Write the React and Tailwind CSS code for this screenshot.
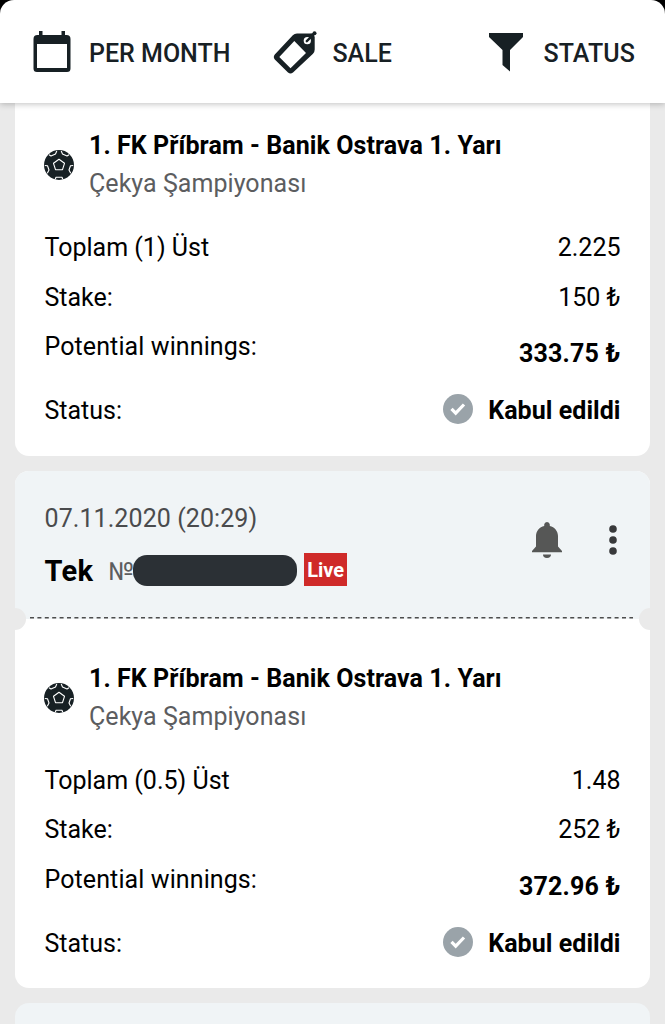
const tickets = [
  {
    id: 1,
    match: "1. FK Příbram - Banik Ostrava 1. Yarı",
    league: "Çekya Şampiyonası",
    market: "Toplam (1) Üst",
    odds: "2.225",
    stake: "150 ₺",
    winnings: "333.75 ₺",
    status: "Kabul edildi",
  },
  {
    id: 2,
    date: "07.11.2020 (20:29)",
    match: "1. FK Příbram - Banik Ostrava 1. Yarı",
    league: "Çekya Şampiyonası",
    market: "Toplam (0.5) Üst",
    odds: "1.48",
    stake: "252 ₺",
    winnings: "372.96 ₺",
    status: "Kabul edildi",
  },
];

function CalendarIcon() {
  return (
    <svg width="38" height="42" viewBox="0 0 38 42" fill="#172024">
      <path d="M6 0h3.500v4h19V0H32v4h1.500a4 4 0 0 1 4 4v29.500a3.500 3.500 0 0 1-3.500 3.500H4a3.500 3.500 0 0 1-3.500-3.500V8a4 4 0 0 1 4-4H6ZM4 13v24h30V13Z" fillRule="evenodd" />
    </svg>
  );
}

function TagIcon() {
  return (
    <svg width="44" height="44" viewBox="0 0 44 44">
      <path
        d="M24 3.500H37L40.200 3.300 41.700 7V19.500q0 2.500-1.700 4.200L20 42.500q-2.500 2-5 0L1.800 29.500q-2-2.500 0-5L19.800 5.300q1.700-1.800 4.200-1.800ZM21.300 11 6.300 27 17.500 38.300 33 23Z"
        fill="#172024"
        fillRule="evenodd"
      />
      <circle cx="34.300" cy="10.700" r="3.600" fill="#fff" />
      <path d="m33.800 11.200 7-7" stroke="#172024" strokeWidth="2.400" strokeLinecap="round" />
      <circle cx="41.500" cy="3.300" r="2" fill="#172024" />
    </svg>
  );
}

function FunnelIcon() {
  return (
    <svg className="mt-[2px]" width="34" height="39" viewBox="0 0 34 39" fill="#172024">
      <path d="M0 0h34v4L21 17v21.500L13.500 32V17L0 4Z" />
    </svg>
  );
}

function BallIcon() {
  return (
    <svg className="shrink-0" width="30" height="30" viewBox="0 0 30 30">
      <circle cx="15" cy="15" r="15" fill="#172024" />
      <g fill="none" stroke="#fff" strokeWidth="1.100" strokeLinejoin="round">
        <path d="m15 9.300 5.500 4-2 6.400h-7l-2-6.400Z" />
        <path d="m5 4.800 2 1.200 4.500-2 1.300-3M25 4.800l-2 1.200-4.500-2-1.300-3" />
        <path d="m.8 15.500 2.700.2 1.500 4.300-1.700 3.300M29.200 15.500l-2.700.2-1.500 4.300 1.700 3.300M11.300 29.300l.7-2h6l.7 2" />
      </g>
    </svg>
  );
}

function CheckIcon() {
  return (
    <svg className="-mt-[4px]" width="30" height="30" viewBox="0 0 30 30">
      <circle cx="15" cy="15" r="15" fill="#9aa3a9" />
      <path d="m8.500 14.800 4.200 4.300 8.300-8.600" fill="none" stroke="#fff" strokeWidth="3.200" />
    </svg>
  );
}

function BellIcon() {
  return (
    <svg width="30" height="36" viewBox="0 0 30 36" fill="#565756">
      <path d="M15 0a2.800 2.800 0 0 1 2.800 2.500V4C22.500 5.200 26 9 26 14v10.500L30 29v1.300H0V29l4-4.500V14C4 9 7.500 5.200 12.200 4V2.500A2.800 2.800 0 0 1 15 0ZM11 32.500h8a4 3.500 0 0 1-8 0Z" />
    </svg>
  );
}

function DotsIcon() {
  return (
    <svg width="8" height="30" viewBox="0 0 8 30" fill="#38393b">
      <circle cx="4" cy="4" r="3.800" />
      <circle cx="4" cy="15" r="3.800" />
      <circle cx="4" cy="26" r="3.800" />
    </svg>
  );
}

function TicketHeader({ date }) {
  return (
    <div className="relative flex h-[148px] justify-between bg-[#f0f4f6] pl-[29.5px] pr-[33px]">
      <div className="pt-[28.5px]">
        <p className="h-[40px] text-[25px] leading-[40px] tracking-[0.08px] text-[#4a4b4d]">{date}</p>
        <div className="mt-[10.5px] flex h-[42px] items-center">
          <span className="pt-[2px] text-[29px] font-bold tracking-[0.300px]">Tek</span>
          <span className="ml-[15px] w-[25px] pt-[2px] text-[25px] text-[#5c5d5f]">№</span>
          <span className="h-[31px] w-[164px] rounded-[14px] bg-[#2b3035]" />
          <span className="mb-[2px] ml-[7px] h-[33px] w-[43px] bg-[#cf2a29] text-center text-[20px] font-bold leading-[34px] text-white">
            Live
          </span>
        </div>
      </div>
      <div className="flex h-[138px] items-center gap-[47px]">
        <BellIcon />
        <DotsIcon />
      </div>
      {/* perforated edge */}
      <svg className="absolute bottom-0 left-0" width="635" height="1.500">
        <line x1="15" y1="0.750" x2="618" y2="0.750" stroke="#4d4d4d" strokeWidth="1.500" strokeDasharray="4 3.400" />
      </svg>
      <span className="absolute -bottom-[11px] -left-[11px] h-[22px] w-[22px] rounded-full bg-[#eaeaea]" />
      <span className="absolute -bottom-[11px] -right-[11px] h-[22px] w-[22px] rounded-full bg-[#eaeaea]" />
    </div>
  );
}

function TicketBody({ ticket }) {
  return (
    <div className="h-[369.5px] pl-[29.5px] pr-[29.5px] pt-[41px] text-[25px]">
      <div className="-ml-[0.5px] flex items-center gap-[15px]">
        <BallIcon />
        <div className="leading-[38px]">
          <h2 className="font-bold tracking-[0.08px]">{ticket.match}</h2>
          <p className="tracking-[0.05px] text-[#5c5d5f]">{ticket.league}</p>
        </div>
      </div>
      <div className="mt-[20px] flex h-[50px] items-center justify-between">
        <span>{ticket.market}</span>
        <span>{ticket.odds}</span>
      </div>
      <div className="flex h-[49px] items-center justify-between">
        <span>Stake:</span>
        <span>{ticket.stake}</span>
      </div>
      <div className="flex h-[64px] items-start justify-between leading-[50px]">
        <span className="tracking-[0.1px]">Potential winnings:</span>
        <span className="pt-[7px] font-bold tracking-[0.2px]">{ticket.winnings}</span>
      </div>
      <div className="flex h-[50px] items-center justify-between">
        <span>Status:</span>
        <span className="flex items-center gap-[15px] font-bold tracking-[0.05px]">
          <CheckIcon />
          {ticket.status}
        </span>
      </div>
    </div>
  );
}

function FilterBar() {
  return (
    <header className="relative z-10 flex h-[103px] items-center rounded-t-[14px] bg-white pl-[33px] pr-[30px] text-[25px] font-medium text-[#172024] shadow-[0_1px_6px_rgba(0,0,0,0.25)]">
      <button className="flex items-center gap-[18px]">
        <CalendarIcon />
        <span className="pt-[4px]">PER MONTH</span>
      </button>
      <button className="ml-[43px] flex items-center gap-[15px]">
        <TagIcon />
        <span className="pt-[4px]">SALE</span>
      </button>
      <button className="ml-auto flex items-center gap-[20px]">
        <FunnelIcon />
        <span className="pt-[4px] tracking-[0.100px]">STATUS</span>
      </button>
    </header>
  );
}

export default function App() {
  return (
    <div className="h-[1024px] w-[665px] overflow-hidden bg-black font-['Roboto',sans-serif] text-black">
      <FilterBar />
      <main className="-mt-[17px] flex h-[938px] flex-col gap-[15px] overflow-hidden bg-[#eaeaea] px-[15px]">
        {tickets.map((ticket) => (
          <section
            key={ticket.id}
            className={`shrink-0 overflow-hidden bg-white ${ticket.date ? "rounded-[14px]" : "rounded-b-[14px]"}`}
          >
            {ticket.date && <TicketHeader date={ticket.date} />}
            <TicketBody ticket={ticket} />
          </section>
        ))}
        <section className="h-[148px] shrink-0 rounded-t-[14px] bg-[#f0f4f6]" />
      </main>
    </div>
  );
}
